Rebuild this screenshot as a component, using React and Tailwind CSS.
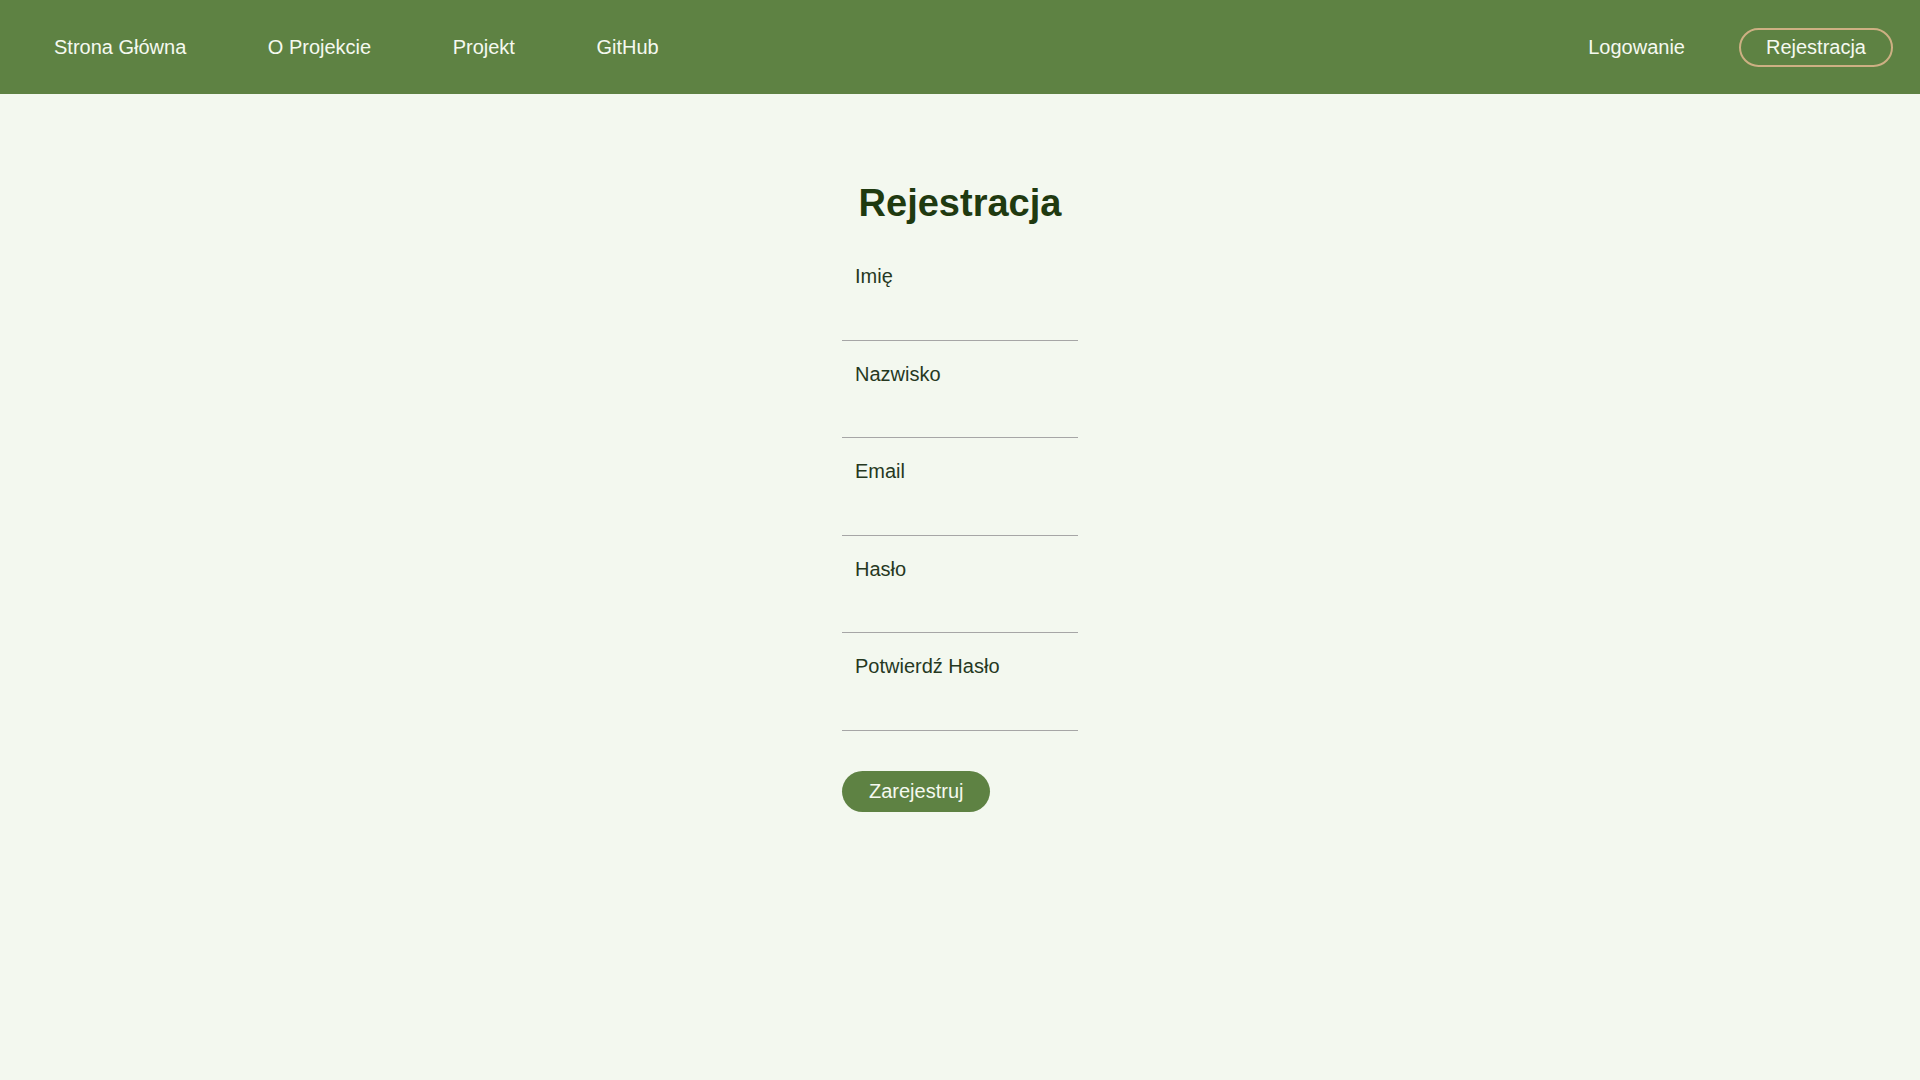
// App.jsx
// Registration page: green top nav + centered sign-up form.

const navLinks = ["Strona Główna", "O Projekcie", "Projekt", "GitHub"];

const fields = [
  { id: "imie", label: "Imię", type: "text" },
  { id: "nazwisko", label: "Nazwisko", type: "text" },
  { id: "email", label: "Email", type: "email" },
  { id: "haslo", label: "Hasło", type: "password" },
  { id: "haslo2", label: "Potwierdź Hasło", type: "password" },
];

export default function App() {
  return (
    <div
      className="min-h-screen bg-[#f3f8ef]"
      style={{ fontFamily: '"Liberation Sans", Arial, sans-serif' }}
    >
      {/* TOP NAV */}
      <header className="flex h-[94px] items-center justify-between bg-[#5e8243] pl-[54px] pr-[27px] text-[20px] leading-[23px] text-[#f5f9f0]">
        <nav className="flex items-center gap-[81.5px]">
          {navLinks.map((l) => (
            <a key={l} href="#" className="whitespace-nowrap">
              {l}
            </a>
          ))}
        </nav>

        <div className="flex items-center gap-[54px]">
          <a href="#">Logowanie</a>
          <a
            href="#"
            className="rounded-full border-2 border-[#cdb083] px-[25px] py-[6px]"
          >
            Rejestracja
          </a>
        </div>
      </header>

      {/* FORM */}
      <main className="flex flex-col items-center pt-[87px]">
        <h1 className="text-center text-[38px] font-bold leading-[44px] text-[#1f3a10]">
          Rejestracja
        </h1>

        <form className="mt-[18px] w-[236px]" onSubmit={(e) => e.preventDefault()}>
          {fields.map((f) => (
            <div key={f.id} className="pt-[22px]">
              <label
                htmlFor={f.id}
                className="block pl-[13px] text-[20px] leading-[23px] text-[#26381f]"
              >
                {f.label}
              </label>
              <input
                id={f.id}
                type={f.type}
                className="block h-[52.5px] w-full border-b border-[#a6a6a6] bg-transparent px-[13px] outline-none"
              />
            </div>
          ))}

          <button
            type="submit"
            className="mt-[40px] rounded-full bg-[#5e8243] px-[27px] py-[9px] text-[20px] leading-[23px] text-[#f5f9f0]"
          >
            Zarejestruj
          </button>
        </form>
      </main>
    </div>
  );
}
